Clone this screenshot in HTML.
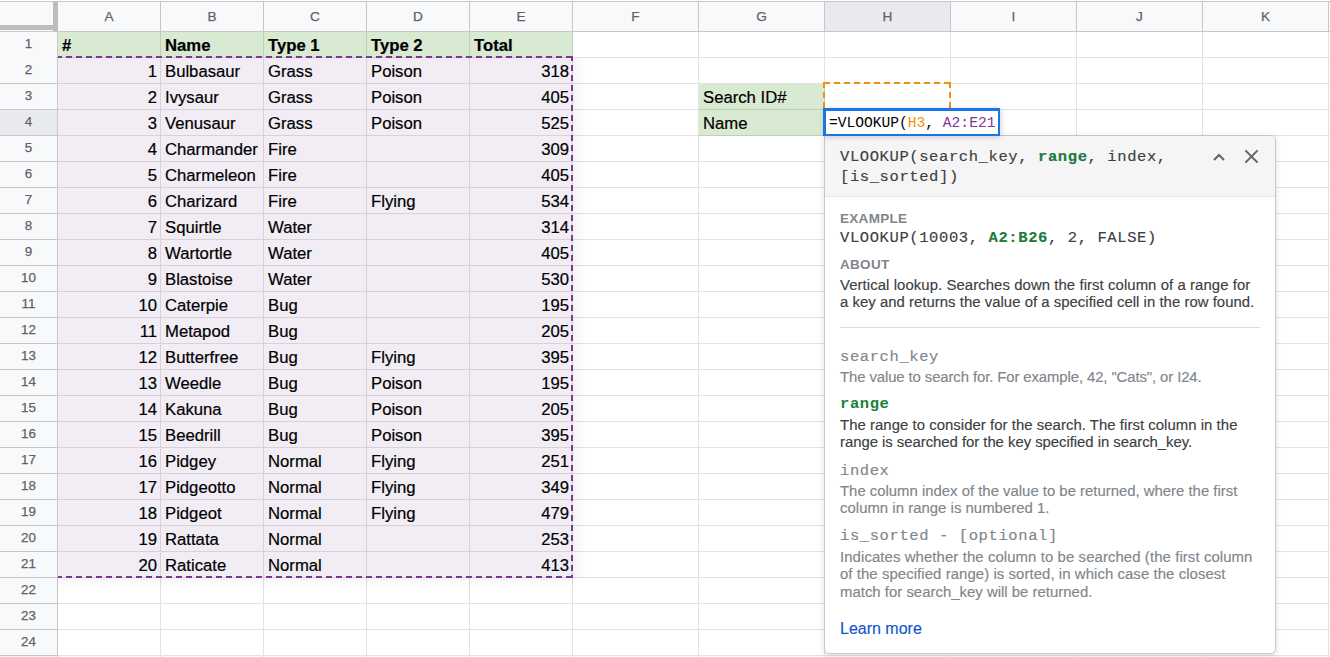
<!DOCTYPE html>
<html><head><meta charset="utf-8">
<style>
html,body{margin:0;padding:0;}
body{width:1330px;height:657px;overflow:hidden;position:relative;background:#fff;font-family:"Liberation Sans",sans-serif;}
.a{position:absolute;}
.t{position:absolute;white-space:pre;color:#000;-webkit-text-stroke:0.2px #000;font-size:16.7px;line-height:26px;height:26px;}
.r{text-align:right;}
.b{font-weight:bold;}
.ch{position:absolute;top:2px;height:29px;line-height:29px;text-align:center;font-size:13.6px;color:#5f6368;-webkit-text-stroke:0.25px #5f6368;}
.rh{position:absolute;left:0;width:57px;height:25px;line-height:23px;text-align:center;font-size:13.4px;color:#5f6368;-webkit-text-stroke:0.25px #5f6368;}
.m{font-family:"Liberation Mono",monospace;}
</style></head><body>

<div class="a" style="left:0;top:1px;width:1330px;height:1px;background:#c7c7c7"></div>
<div class="a" style="left:0;top:2px;width:1329px;height:29px;background:#f8f9fa"></div>
<div class="a" style="left:0;top:31px;width:57px;height:626px;background:#f8f9fa"></div>
<div class="a" style="left:825px;top:2px;width:125px;height:29px;background:#e8eaed"></div>
<div class="a" style="left:0;top:110px;width:57px;height:25px;background:#e8eaed"></div>
<div class="a" style="left:58px;top:32px;width:515px;height:26px;background:#d9ead3"></div>
<div class="a" style="left:58px;top:58px;width:515px;height:520px;background:#f2edf5"></div>
<div class="a" style="left:699px;top:84px;width:126px;height:52px;background:#d9ead3"></div>
<svg class="a" style="left:0;top:0" width="1330" height="657"><path d="M160.5 32V657M263.5 32V657M366.5 32V657M469.5 32V657M572.5 32V657M698.5 32V657M824.5 32V657M950.5 32V657M1076.5 32V657M1202.5 32V657M1328.5 32V657M58 57.5H1330M58 83.5H1330M58 109.5H1330M58 135.5H1330M58 161.5H1330M58 187.5H1330M58 213.5H1330M58 239.5H1330M58 265.5H1330M58 291.5H1330M58 317.5H1330M58 343.5H1330M58 369.5H1330M58 395.5H1330M58 421.5H1330M58 447.5H1330M58 473.5H1330M58 499.5H1330M58 525.5H1330M58 551.5H1330M58 577.5H1330M58 603.5H1330M58 629.5H1330M58 655.5H1330" stroke="#000" stroke-opacity="0.113" stroke-width="1" shape-rendering="crispEdges" fill="none"/></svg>
<div class="a" style="left:160px;top:2px;width:1px;height:29px;background:#c7c7c7"></div>
<div class="a" style="left:263px;top:2px;width:1px;height:29px;background:#c7c7c7"></div>
<div class="a" style="left:366px;top:2px;width:1px;height:29px;background:#c7c7c7"></div>
<div class="a" style="left:469px;top:2px;width:1px;height:29px;background:#c7c7c7"></div>
<div class="a" style="left:572px;top:2px;width:1px;height:29px;background:#c7c7c7"></div>
<div class="a" style="left:698px;top:2px;width:1px;height:29px;background:#c7c7c7"></div>
<div class="a" style="left:824px;top:2px;width:1px;height:29px;background:#c7c7c7"></div>
<div class="a" style="left:950px;top:2px;width:1px;height:29px;background:#c7c7c7"></div>
<div class="a" style="left:1076px;top:2px;width:1px;height:29px;background:#c7c7c7"></div>
<div class="a" style="left:1202px;top:2px;width:1px;height:29px;background:#c7c7c7"></div>
<div class="a" style="left:1328px;top:2px;width:1px;height:29px;background:#c7c7c7"></div>
<div class="a" style="left:0;top:31px;width:1330px;height:1px;background:#c7c7c7"></div>
<div class="a" style="left:57px;top:2px;width:1px;height:655px;background:#c7c7c7"></div>
<div class="a" style="left:0;top:57px;width:57px;height:1px;background:#c7c7c7"></div>
<div class="a" style="left:0;top:83px;width:57px;height:1px;background:#c7c7c7"></div>
<div class="a" style="left:0;top:109px;width:57px;height:1px;background:#c7c7c7"></div>
<div class="a" style="left:0;top:135px;width:57px;height:1px;background:#c7c7c7"></div>
<div class="a" style="left:0;top:161px;width:57px;height:1px;background:#c7c7c7"></div>
<div class="a" style="left:0;top:187px;width:57px;height:1px;background:#c7c7c7"></div>
<div class="a" style="left:0;top:213px;width:57px;height:1px;background:#c7c7c7"></div>
<div class="a" style="left:0;top:239px;width:57px;height:1px;background:#c7c7c7"></div>
<div class="a" style="left:0;top:265px;width:57px;height:1px;background:#c7c7c7"></div>
<div class="a" style="left:0;top:291px;width:57px;height:1px;background:#c7c7c7"></div>
<div class="a" style="left:0;top:317px;width:57px;height:1px;background:#c7c7c7"></div>
<div class="a" style="left:0;top:343px;width:57px;height:1px;background:#c7c7c7"></div>
<div class="a" style="left:0;top:369px;width:57px;height:1px;background:#c7c7c7"></div>
<div class="a" style="left:0;top:395px;width:57px;height:1px;background:#c7c7c7"></div>
<div class="a" style="left:0;top:421px;width:57px;height:1px;background:#c7c7c7"></div>
<div class="a" style="left:0;top:447px;width:57px;height:1px;background:#c7c7c7"></div>
<div class="a" style="left:0;top:473px;width:57px;height:1px;background:#c7c7c7"></div>
<div class="a" style="left:0;top:499px;width:57px;height:1px;background:#c7c7c7"></div>
<div class="a" style="left:0;top:525px;width:57px;height:1px;background:#c7c7c7"></div>
<div class="a" style="left:0;top:551px;width:57px;height:1px;background:#c7c7c7"></div>
<div class="a" style="left:0;top:577px;width:57px;height:1px;background:#c7c7c7"></div>
<div class="a" style="left:0;top:603px;width:57px;height:1px;background:#c7c7c7"></div>
<div class="a" style="left:0;top:629px;width:57px;height:1px;background:#c7c7c7"></div>
<div class="a" style="left:0;top:655px;width:57px;height:1px;background:#c7c7c7"></div>
<div class="a" style="left:53px;top:2px;width:5px;height:29px;background:#bdbdbd"></div>
<div class="a" style="left:0;top:25px;width:53px;height:5px;background:#bdbdbd"></div>
<div class="ch" style="left:58px;width:102px">A</div>
<div class="ch" style="left:161px;width:102px">B</div>
<div class="ch" style="left:264px;width:102px">C</div>
<div class="ch" style="left:367px;width:102px">D</div>
<div class="ch" style="left:470px;width:102px">E</div>
<div class="ch" style="left:573px;width:125px">F</div>
<div class="ch" style="left:699px;width:125px">G</div>
<div class="ch" style="left:825px;width:125px">H</div>
<div class="ch" style="left:951px;width:125px">I</div>
<div class="ch" style="left:1077px;width:125px">J</div>
<div class="ch" style="left:1203px;width:125px">K</div>
<div class="rh" style="top:32px">1</div>
<div class="rh" style="top:58px">2</div>
<div class="rh" style="top:84px">3</div>
<div class="rh" style="top:110px">4</div>
<div class="rh" style="top:136px">5</div>
<div class="rh" style="top:162px">6</div>
<div class="rh" style="top:188px">7</div>
<div class="rh" style="top:214px">8</div>
<div class="rh" style="top:240px">9</div>
<div class="rh" style="top:266px">10</div>
<div class="rh" style="top:292px">11</div>
<div class="rh" style="top:318px">12</div>
<div class="rh" style="top:344px">13</div>
<div class="rh" style="top:370px">14</div>
<div class="rh" style="top:396px">15</div>
<div class="rh" style="top:422px">16</div>
<div class="rh" style="top:448px">17</div>
<div class="rh" style="top:474px">18</div>
<div class="rh" style="top:500px">19</div>
<div class="rh" style="top:526px">20</div>
<div class="rh" style="top:552px">21</div>
<div class="rh" style="top:578px">22</div>
<div class="rh" style="top:604px">23</div>
<div class="rh" style="top:630px">24</div>
<div class="t b" style="left:62px;top:33px;">#</div>
<div class="t b" style="left:165px;top:33px;">Name</div>
<div class="t b" style="left:268px;top:33px;">Type 1</div>
<div class="t b" style="left:371px;top:33px;">Type 2</div>
<div class="t b" style="left:474px;top:33px;">Total</div>
<div class="t r" style="left:58px;width:99px;top:59px;">1</div>
<div class="t" style="left:165px;top:59px;">Bulbasaur</div>
<div class="t" style="left:268px;top:59px;">Grass</div>
<div class="t" style="left:371px;top:59px;">Poison</div>
<div class="t r" style="left:470px;width:99px;top:59px;">318</div>
<div class="t r" style="left:58px;width:99px;top:85px;">2</div>
<div class="t" style="left:165px;top:85px;">Ivysaur</div>
<div class="t" style="left:268px;top:85px;">Grass</div>
<div class="t" style="left:371px;top:85px;">Poison</div>
<div class="t r" style="left:470px;width:99px;top:85px;">405</div>
<div class="t r" style="left:58px;width:99px;top:111px;">3</div>
<div class="t" style="left:165px;top:111px;">Venusaur</div>
<div class="t" style="left:268px;top:111px;">Grass</div>
<div class="t" style="left:371px;top:111px;">Poison</div>
<div class="t r" style="left:470px;width:99px;top:111px;">525</div>
<div class="t r" style="left:58px;width:99px;top:137px;">4</div>
<div class="t" style="left:165px;top:137px;">Charmander</div>
<div class="t" style="left:268px;top:137px;">Fire</div>
<div class="t" style="left:371px;top:137px;"></div>
<div class="t r" style="left:470px;width:99px;top:137px;">309</div>
<div class="t r" style="left:58px;width:99px;top:163px;">5</div>
<div class="t" style="left:165px;top:163px;">Charmeleon</div>
<div class="t" style="left:268px;top:163px;">Fire</div>
<div class="t" style="left:371px;top:163px;"></div>
<div class="t r" style="left:470px;width:99px;top:163px;">405</div>
<div class="t r" style="left:58px;width:99px;top:189px;">6</div>
<div class="t" style="left:165px;top:189px;">Charizard</div>
<div class="t" style="left:268px;top:189px;">Fire</div>
<div class="t" style="left:371px;top:189px;">Flying</div>
<div class="t r" style="left:470px;width:99px;top:189px;">534</div>
<div class="t r" style="left:58px;width:99px;top:215px;">7</div>
<div class="t" style="left:165px;top:215px;">Squirtle</div>
<div class="t" style="left:268px;top:215px;">Water</div>
<div class="t" style="left:371px;top:215px;"></div>
<div class="t r" style="left:470px;width:99px;top:215px;">314</div>
<div class="t r" style="left:58px;width:99px;top:241px;">8</div>
<div class="t" style="left:165px;top:241px;">Wartortle</div>
<div class="t" style="left:268px;top:241px;">Water</div>
<div class="t" style="left:371px;top:241px;"></div>
<div class="t r" style="left:470px;width:99px;top:241px;">405</div>
<div class="t r" style="left:58px;width:99px;top:267px;">9</div>
<div class="t" style="left:165px;top:267px;">Blastoise</div>
<div class="t" style="left:268px;top:267px;">Water</div>
<div class="t" style="left:371px;top:267px;"></div>
<div class="t r" style="left:470px;width:99px;top:267px;">530</div>
<div class="t r" style="left:58px;width:99px;top:293px;">10</div>
<div class="t" style="left:165px;top:293px;">Caterpie</div>
<div class="t" style="left:268px;top:293px;">Bug</div>
<div class="t" style="left:371px;top:293px;"></div>
<div class="t r" style="left:470px;width:99px;top:293px;">195</div>
<div class="t r" style="left:58px;width:99px;top:319px;">11</div>
<div class="t" style="left:165px;top:319px;">Metapod</div>
<div class="t" style="left:268px;top:319px;">Bug</div>
<div class="t" style="left:371px;top:319px;"></div>
<div class="t r" style="left:470px;width:99px;top:319px;">205</div>
<div class="t r" style="left:58px;width:99px;top:345px;">12</div>
<div class="t" style="left:165px;top:345px;">Butterfree</div>
<div class="t" style="left:268px;top:345px;">Bug</div>
<div class="t" style="left:371px;top:345px;">Flying</div>
<div class="t r" style="left:470px;width:99px;top:345px;">395</div>
<div class="t r" style="left:58px;width:99px;top:371px;">13</div>
<div class="t" style="left:165px;top:371px;">Weedle</div>
<div class="t" style="left:268px;top:371px;">Bug</div>
<div class="t" style="left:371px;top:371px;">Poison</div>
<div class="t r" style="left:470px;width:99px;top:371px;">195</div>
<div class="t r" style="left:58px;width:99px;top:397px;">14</div>
<div class="t" style="left:165px;top:397px;">Kakuna</div>
<div class="t" style="left:268px;top:397px;">Bug</div>
<div class="t" style="left:371px;top:397px;">Poison</div>
<div class="t r" style="left:470px;width:99px;top:397px;">205</div>
<div class="t r" style="left:58px;width:99px;top:423px;">15</div>
<div class="t" style="left:165px;top:423px;">Beedrill</div>
<div class="t" style="left:268px;top:423px;">Bug</div>
<div class="t" style="left:371px;top:423px;">Poison</div>
<div class="t r" style="left:470px;width:99px;top:423px;">395</div>
<div class="t r" style="left:58px;width:99px;top:449px;">16</div>
<div class="t" style="left:165px;top:449px;">Pidgey</div>
<div class="t" style="left:268px;top:449px;">Normal</div>
<div class="t" style="left:371px;top:449px;">Flying</div>
<div class="t r" style="left:470px;width:99px;top:449px;">251</div>
<div class="t r" style="left:58px;width:99px;top:475px;">17</div>
<div class="t" style="left:165px;top:475px;">Pidgeotto</div>
<div class="t" style="left:268px;top:475px;">Normal</div>
<div class="t" style="left:371px;top:475px;">Flying</div>
<div class="t r" style="left:470px;width:99px;top:475px;">349</div>
<div class="t r" style="left:58px;width:99px;top:501px;">18</div>
<div class="t" style="left:165px;top:501px;">Pidgeot</div>
<div class="t" style="left:268px;top:501px;">Normal</div>
<div class="t" style="left:371px;top:501px;">Flying</div>
<div class="t r" style="left:470px;width:99px;top:501px;">479</div>
<div class="t r" style="left:58px;width:99px;top:527px;">19</div>
<div class="t" style="left:165px;top:527px;">Rattata</div>
<div class="t" style="left:268px;top:527px;">Normal</div>
<div class="t" style="left:371px;top:527px;"></div>
<div class="t r" style="left:470px;width:99px;top:527px;">253</div>
<div class="t r" style="left:58px;width:99px;top:553px;">20</div>
<div class="t" style="left:165px;top:553px;">Raticate</div>
<div class="t" style="left:268px;top:553px;">Normal</div>
<div class="t" style="left:371px;top:553px;"></div>
<div class="t r" style="left:470px;width:99px;top:553px;">413</div>
<div class="t" style="left:703px;top:85px;">Search ID#</div>
<div class="t" style="left:703px;top:111px;">Name</div>
<div class="a" style="left:573px;top:58px;width:14px;height:520px;background:linear-gradient(to right,rgba(0,0,0,0.045),rgba(0,0,0,0))"></div>
<div class="a" style="left:58px;top:578px;width:515px;height:10px;background:linear-gradient(to bottom,rgba(0,0,0,0.035),rgba(0,0,0,0))"></div>
<svg class="a" style="left:0;top:0" width="1330" height="657">
<path d="M58 57 H573" stroke="#7e3794" stroke-width="2" stroke-dasharray="6 4" stroke-dashoffset="2" fill="none"/><path d="M58 577 H573" stroke="#7e3794" stroke-width="2" stroke-dasharray="6 4" stroke-dashoffset="2" fill="none"/><path d="M572 56 V578" stroke="#7e3794" stroke-width="2" stroke-dasharray="6 4" stroke-dashoffset="1" fill="none"/>
<path d="M823 83 H951" stroke="#f4900c" stroke-width="2" stroke-dasharray="6 4" stroke-dashoffset="-1" fill="none"/><path d="M823 109 H951" stroke="#f4900c" stroke-width="2" stroke-dasharray="6 4" stroke-dashoffset="-1" fill="none"/><path d="M824 82 V110" stroke="#f4900c" stroke-width="2" stroke-dasharray="6 4" fill="none"/><path d="M950 82 V110" stroke="#f4900c" stroke-width="2" stroke-dasharray="6 4" stroke-dashoffset="0" fill="none"/>
</svg>
<div class="a" style="left:0;top:56px;width:56px;height:2px;background:#f8f9fa"></div>
<div class="a" style="left:824px;top:135px;width:450px;height:517px;border:1px solid #c6c6c6;border-radius:0 5px 5px 5px;background:#fff;box-shadow:0 2px 6px rgba(0,0,0,.12);overflow:hidden">
<div class="a" style="left:0;top:0;width:450px;height:60px;background:#f5f5f5;border-bottom:1px solid #e6e6e6"></div>
</div>
<div class="a" style="left:823px;top:108px;width:172px;height:23px;z-index:5;border:2px solid;border-width:3px 2px 2px 3px;border-color: #1a73e8;background:#fff;box-shadow:1px 1px 6px rgba(0,0,0,0.18);"></div>
<div class="a m" style="z-index:6;left:829px;top:110px;height:26px;line-height:26px;font-size:14.6px;color:#000;white-space:pre">=VLOOKUP(<span style="color:#f4900c">H3</span>, <span style="color:#7e3794">A2:E21</span></div>
<div class="a" style="left:840.00px;top:146.88px;font-family:'Liberation Mono',monospace;font-size:15.50px;line-height:20px;color:#3c4043;white-space:pre;letter-spacing:0.60px;-webkit-text-stroke:0.15px #3c4043;">VLOOKUP(search_key, <b style="color:#188038">range</b>, index,</div>
<div class="a" style="left:840.00px;top:166.88px;font-family:'Liberation Mono',monospace;font-size:15.50px;line-height:20px;color:#3c4043;white-space:pre;letter-spacing:0.60px;-webkit-text-stroke:0.15px #3c4043;">[is_sorted])</div>
<div class="a" style="left:840.00px;top:209.52px;font-family:'Liberation Sans',sans-serif;font-size:13.50px;line-height:18px;color:#80868b;font-weight:bold;white-space:pre;letter-spacing:0.3px;">EXAMPLE</div>
<div class="a" style="left:840.00px;top:227.88px;font-family:'Liberation Mono',monospace;font-size:15.50px;line-height:20px;color:#3c4043;white-space:pre;letter-spacing:0.60px;-webkit-text-stroke:0.15px #3c4043;">VLOOKUP(10003, <b style="color:#188038">A2:B26</b>, 2, FALSE)</div>
<div class="a" style="left:840.00px;top:256.12px;font-family:'Liberation Sans',sans-serif;font-size:13.50px;line-height:18px;color:#80868b;font-weight:bold;white-space:pre;letter-spacing:0.3px;">ABOUT</div>
<div class="a" style="left:840.00px;top:275.84px;font-family:'Liberation Sans',sans-serif;font-size:14.90px;line-height:19px;color:#3c4043;white-space:pre;letter-spacing:0.077px;-webkit-text-stroke:0.15px #3c4043;">Vertical lookup. Searches down the first column of a range for</div>
<div class="a" style="left:840.00px;top:293.34px;font-family:'Liberation Sans',sans-serif;font-size:14.90px;line-height:19px;color:#3c4043;white-space:pre;letter-spacing:0.031px;-webkit-text-stroke:0.15px #3c4043;">a key and returns the value of a specified cell in the row found.</div>
<div class="a" style="left:840px;top:327px;width:420px;height:1px;background:#dadce0"></div>
<div class="a" style="left:840.00px;top:346.68px;font-family:'Liberation Mono',monospace;font-size:15.50px;line-height:20px;color:#80868b;white-space:pre;letter-spacing:0.60px;-webkit-text-stroke:0.15px #80868b;">search_key</div>
<div class="a" style="left:840.00px;top:367.54px;font-family:'Liberation Sans',sans-serif;font-size:14.90px;line-height:19px;color:#80868b;white-space:pre;letter-spacing:-0.100px;-webkit-text-stroke:0.15px #80868b;">The value to search for. For example, 42, "Cats", or I24.</div>
<div class="a" style="left:840.00px;top:394.08px;font-family:'Liberation Mono',monospace;font-size:15.50px;line-height:20px;color:#188038;font-weight:bold;white-space:pre;letter-spacing:0.60px;">range</div>
<div class="a" style="left:840.00px;top:415.64px;font-family:'Liberation Sans',sans-serif;font-size:14.90px;line-height:19px;color:#3c4043;white-space:pre;letter-spacing:0.048px;-webkit-text-stroke:0.15px #3c4043;">The range to consider for the search. The first column in the</div>
<div class="a" style="left:840.00px;top:433.34px;font-family:'Liberation Sans',sans-serif;font-size:14.90px;line-height:19px;color:#3c4043;white-space:pre;letter-spacing:-0.034px;-webkit-text-stroke:0.15px #3c4043;">range is searched for the key specified in search_key.</div>
<div class="a" style="left:840.00px;top:460.68px;font-family:'Liberation Mono',monospace;font-size:15.50px;line-height:20px;color:#80868b;white-space:pre;letter-spacing:0.60px;-webkit-text-stroke:0.15px #80868b;">index</div>
<div class="a" style="left:840.00px;top:481.54px;font-family:'Liberation Sans',sans-serif;font-size:14.90px;line-height:19px;color:#80868b;white-space:pre;letter-spacing:0.000px;-webkit-text-stroke:0.15px #80868b;">The column index of the value to be returned, where the first</div>
<div class="a" style="left:840.00px;top:498.84px;font-family:'Liberation Sans',sans-serif;font-size:14.90px;line-height:19px;color:#80868b;white-space:pre;letter-spacing:0.030px;-webkit-text-stroke:0.15px #80868b;">column in range is numbered 1.</div>
<div class="a" style="left:840.00px;top:526.18px;font-family:'Liberation Mono',monospace;font-size:15.50px;line-height:20px;color:#80868b;white-space:pre;letter-spacing:0.60px;-webkit-text-stroke:0.15px #80868b;">is_sorted - [optional]</div>
<div class="a" style="left:840.00px;top:547.64px;font-family:'Liberation Sans',sans-serif;font-size:14.90px;line-height:19px;color:#80868b;white-space:pre;letter-spacing:0.100px;-webkit-text-stroke:0.15px #80868b;">Indicates whether the column to be searched (the first column</div>
<div class="a" style="left:840.00px;top:564.84px;font-family:'Liberation Sans',sans-serif;font-size:14.90px;line-height:19px;color:#80868b;white-space:pre;letter-spacing:0.080px;-webkit-text-stroke:0.15px #80868b;">of the specified range) is sorted, in which case the closest</div>
<div class="a" style="left:840.00px;top:583.24px;font-family:'Liberation Sans',sans-serif;font-size:14.90px;line-height:19px;color:#80868b;white-space:pre;letter-spacing:0.020px;-webkit-text-stroke:0.15px #80868b;">match for search_key will be returned.</div>
<div class="a" style="left:840.00px;top:618.16px;font-family:'Liberation Sans',sans-serif;font-size:16.00px;line-height:21px;color:#1155cc;white-space:pre;-webkit-text-stroke:0.15px #1155cc;">Learn more</div>
<svg class="a" style="left:1200px;top:140px" width="80" height="30" viewBox="0 0 80 30">
<path d="M14 20 L19 15 L24 20" stroke="#5f6368" stroke-width="2" fill="none"/>
<path d="M45.4 10.4 L57.6 22.6 M57.6 10.4 L45.4 22.6" stroke="#5f6368" stroke-width="2" fill="none"/>
</svg>
</body></html>
